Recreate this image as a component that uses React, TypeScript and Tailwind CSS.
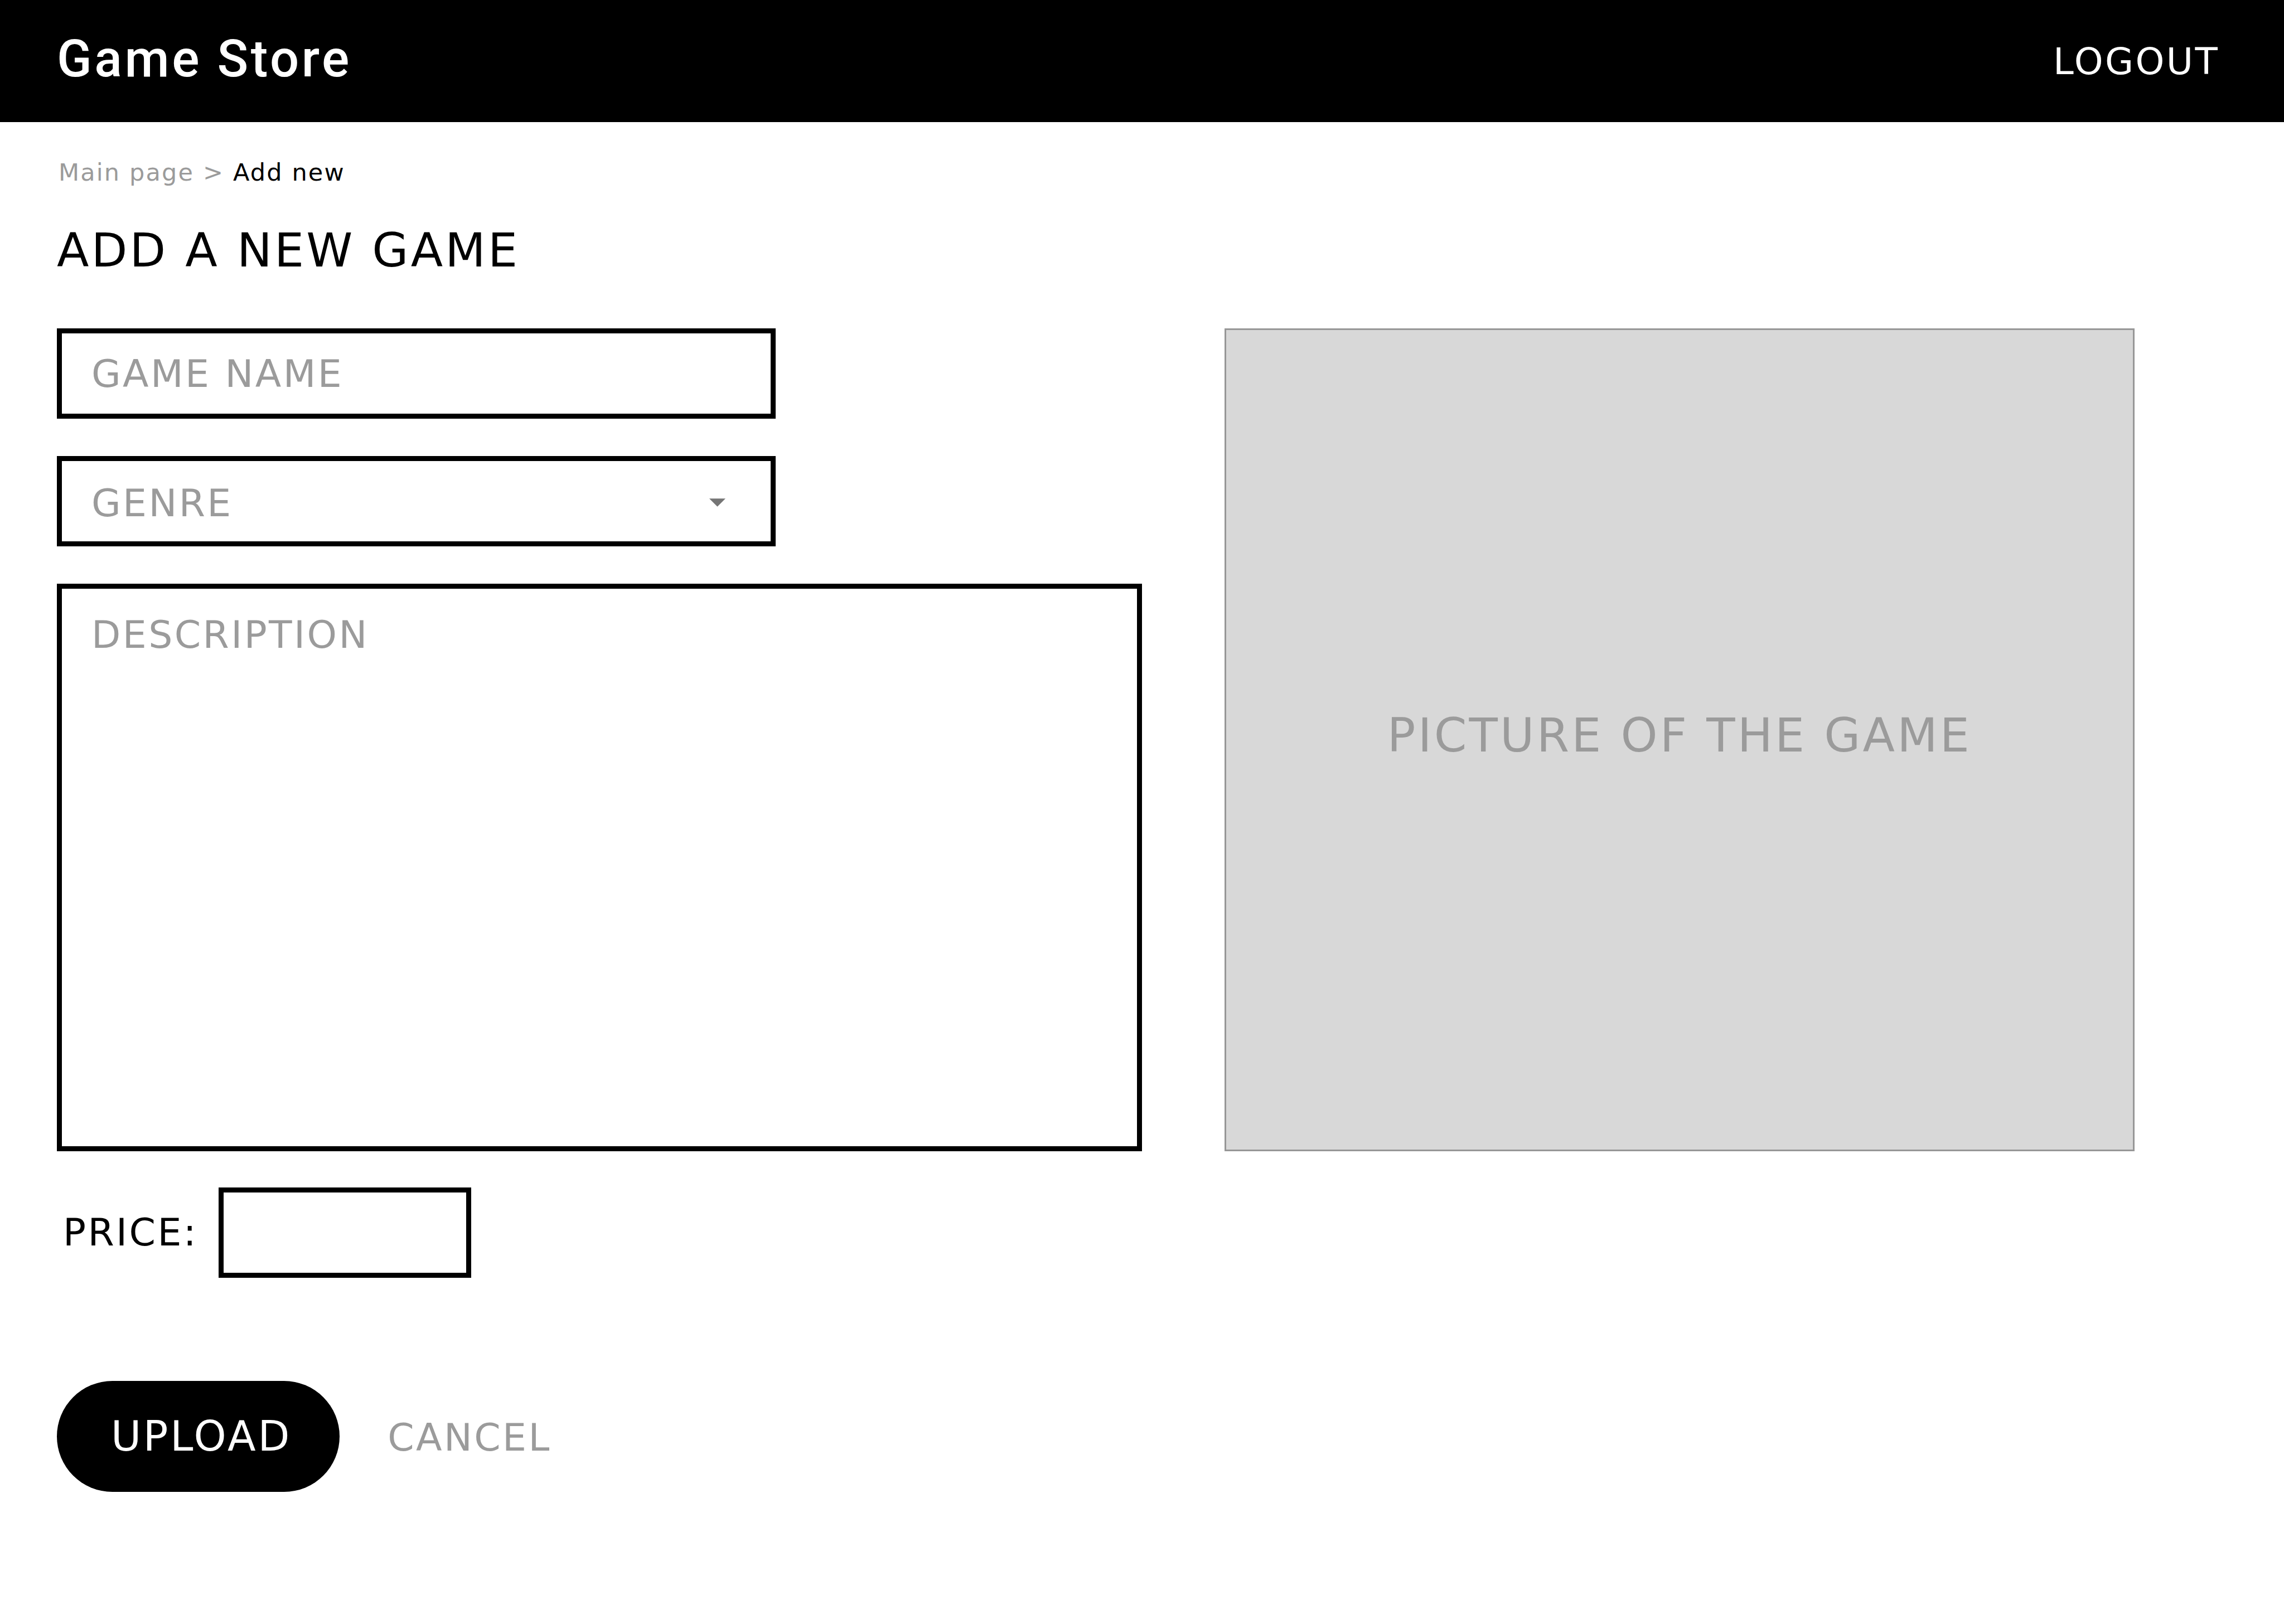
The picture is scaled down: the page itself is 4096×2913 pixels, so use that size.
import React, { useState } from "react";

const field =
  "block border-[9px] border-black bg-white rounded-none text-[68px] tracking-wider text-black placeholder:text-[#9b9b9b] placeholder:opacity-100 outline-none focus:border-gray-700";

function Header() {
  return (
    <header className="flex h-[219px] items-start justify-between bg-black pl-[102px] pr-[116px] text-white">
      <a
        href="#home"
        className="pt-[46px] font-[Roboto,sans-serif] text-[92px] font-medium leading-[120px] tracking-wider"
      >
        Game Store
      </a>
      <button type="button" className="pt-[61px] text-[66px] leading-[100px] tracking-wider">
        LOGOUT
      </button>
    </header>
  );
}

function Breadcrumb() {
  return (
    <nav aria-label="Breadcrumb" className="text-[43px] leading-[60px] tracking-wider text-[#9b9b9b]">
      <a href="#main">Main page</a> &gt;{" "}
      <span aria-current="page" className="text-black">
        Add new
      </span>
    </nav>
  );
}

function GenreSelect() {
  const [genre, setGenre] = useState("");
  return (
    <div className="relative w-full max-w-[1289px]">
      <select
        aria-label="Genre"
        value={genre}
        onChange={(e) => setGenre(e.target.value)}
        className="block h-[162px] w-full appearance-none rounded-none border-[9px] border-black bg-white pl-[53px] pr-[120px] pt-2 text-[68px] tracking-wider text-[#9b9b9b] outline-none"
      >
        <option value="">GENRE</option>
        <option value="action">ACTION</option>
        <option value="puzzle">PUZZLE</option>
        <option value="strategy">STRATEGY</option>
      </select>
      <svg
        aria-hidden="true"
        viewBox="0 0 28 14"
        className="pointer-events-none absolute right-[90px] top-[76px] h-[15px] w-[29px] fill-[#757575]"
      >
        <path d="M0 0h28L14 14z" />
      </svg>
    </div>
  );
}

export default function App() {
  return (
    <div className="min-h-screen bg-white font-['DejaVu_Sans',sans-serif] text-black">
      <Header />
      <main className="pl-[102px] pr-[268px] pt-[60px]">
        <div className="pl-[3px]">
          <Breadcrumb />
        </div>
        <h1 className="mt-[60px] text-[84px] leading-[100px] tracking-wider">ADD A NEW GAME</h1>

        <form className="mt-[90px]" onSubmit={(e) => e.preventDefault()}>
          <div className="grid grid-cols-[1946fr_1632fr] gap-[148px]">
            <div className="flex flex-col gap-[67px]">
              <input
                type="text"
                aria-label="Game name"
                placeholder="GAME NAME"
                className={`${field} h-[162px] w-full max-w-[1289px] px-[53px]`}
              />
              <GenreSelect />
              <textarea
                aria-label="Description"
                placeholder="DESCRIPTION"
                className={`${field} h-[1018px] w-full resize-none px-[53px] py-[43px] leading-[80px]`}
              />
            </div>
            <div className="flex items-center justify-center border-[3px] border-[#979797] bg-[#d8d8d8] pb-4 text-[84px] leading-[100px] tracking-wider text-[#9b9b9b]">
              PICTURE OF THE GAME
            </div>
          </div>

          <div className="mt-[65px] flex items-center gap-[37px] pl-[11px]">
            <label htmlFor="price" className="text-[68px] leading-[80px] tracking-wider">
              PRICE:
            </label>
            <input id="price" type="text" className={`${field} h-[162px] w-[453px] px-[32px]`} />
          </div>

          <div className="mt-[185px] flex items-baseline gap-[86px] pb-[237px]">
            <button
              type="submit"
              className="h-[199px] rounded-full bg-black pl-[97px] pr-[86px] text-[74px] tracking-wider text-white"
            >
              UPLOAD
            </button>
            <button type="button" className="text-[68px] tracking-wider text-[#9b9b9b]">
              CANCEL
            </button>
          </div>
        </form>
      </main>
    </div>
  );
}
